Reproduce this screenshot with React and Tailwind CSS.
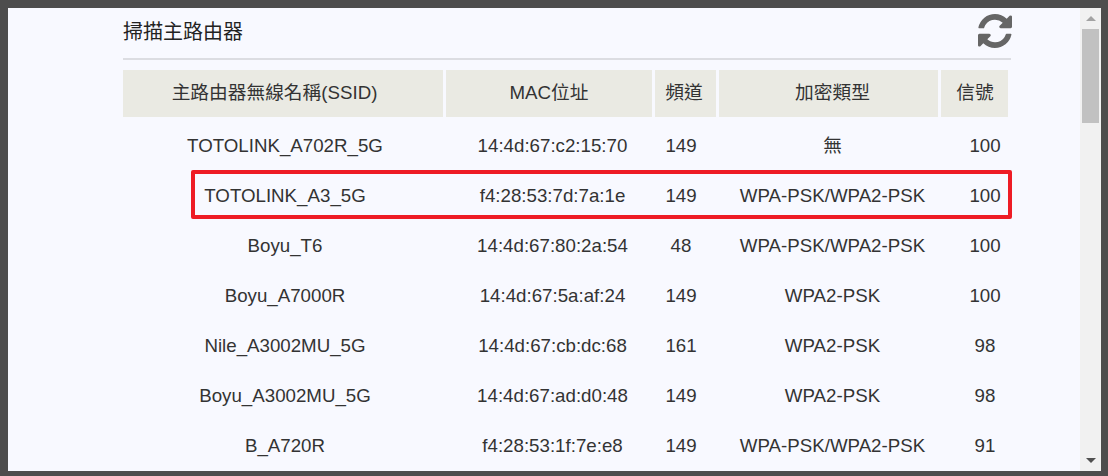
import React from "react";

const rows = [
  ["TOTOLINK_A702R_5G", "14:4d:67:c2:15:70", "149", "無", "100"],
  ["TOTOLINK_A3_5G", "f4:28:53:7d:7a:1e", "149", "WPA-PSK/WPA2-PSK", "100"],
  ["Boyu_T6", "14:4d:67:80:2a:54", "48", "WPA-PSK/WPA2-PSK", "100"],
  ["Boyu_A7000R", "14:4d:67:5a:af:24", "149", "WPA2-PSK", "100"],
  ["Nile_A3002MU_5G", "14:4d:67:cb:dc:68", "161", "WPA2-PSK", "98"],
  ["Boyu_A3002MU_5G", "14:4d:67:ad:d0:48", "149", "WPA2-PSK", "98"],
  ["B_A720R", "f4:28:53:1f:7e:e8", "149", "WPA-PSK/WPA2-PSK", "91"],
];

const headers = [
  ["主路由器無線名稱(SSID)", "pr-[17px]"],
  ["MAC位址", ""],
  ["頻道", "pr-[3px]"],
  ["加密類型", "pl-[8px]"],
  ["信號", "pl-[1px]"],
];

const cellPad = ["pl-[4px]", "pl-[7px]", "pr-[9px]", "pl-[8px]", "pl-[21px]"];

export default function App() {
  return (
    <div className="h-[476px] w-[1108px] overflow-hidden bg-[#4d4d4d] pt-2 pr-[7px] pb-[5px] pl-2 font-['Liberation_Sans','Noto_Sans_CJK_TC',sans-serif] text-[18.72px] text-[#333]">
      <div className="relative flex h-full bg-[#f8f9ff]">
        <div className="min-w-0 flex-1 overflow-hidden pl-[115px]">
          <div className="flex h-[52px] w-[888px] items-start justify-between border-b-2 border-[#dcdde2]">
            <h2 className="mt-3 text-[20px] leading-6 text-[#222]">掃描主路由器</h2>
            <svg viewBox="128 128 1536 1536" className="mt-1.5 -mr-px h-[34px] w-[34px] fill-[#666]">
              <path d="M1639 1056q0 5-1 7-64 268-268 434.5t-478 166.5q-146 0-282.5-55t-243.5-157l-129 129q-19 19-45 19t-45-19-19-45v-448q0-26 19-45t45-19h448q26 0 45 19t19 45-19 45l-137 137q71 66 161 102t187 36q134 0 250-65t186-179q11-17 53-117 8-23 30-23h192q13 0 22.5 9.5t9.5 22.5zm25-800v448q0 26-19 45t-45 19h-448q-26 0-45-19t-19-45 19-45l138-138q-148-137-349-137-134 0-250 65t-186 179q-11 17-53 117-8 23-30 23h-199q-13 0-22.5-9.5t-9.5-22.5v-7q65-268 270-434.5t480-166.5q146 0 284 55.5t245 156.5l130-129q19-19 45-19t45 19 19 45z" />
            </svg>
          </div>
          <table className="-ml-[3px] mt-[7px] w-[891px] table-fixed border-separate border-spacing-[3px] text-center">
            <colgroup>
              <col className="w-[320px]" />
              <col className="w-[206px]" />
              <col className="w-[61px]" />
              <col className="w-[219px]" />
              <col className="w-[67px]" />
            </colgroup>
            <thead>
              <tr>
                {headers.map(([h, pad]) => (
                  <th key={h} className={`h-[47px] bg-[#eaeae3] py-0 font-normal ${pad}`}>{h}</th>
                ))}
              </tr>
            </thead>
            <tbody>
              {rows.map((r) => (
                <tr key={r[1]}>
                  {r.map((c, i) => (
                    <td key={i} className={`h-[47px] pt-1.5 pb-0 ${cellPad[i]}`}>{c}</td>
                  ))}
                </tr>
              ))}
            </tbody>
          </table>
        </div>
        <div className="flex h-full w-[21px] shrink-0 flex-col bg-[#f1f1f1] px-0.5">
          <div className="flex h-[21px] items-center justify-center">
            <div className="h-0 w-0 border-x-[5px] border-b-[5px] border-x-transparent border-b-[#a3a3a3]" />
          </div>
          <div className="h-[94px] bg-[#c1c1c1]" />
          <div className="flex-1" />
          <div className="flex h-[21px] items-center justify-center">
            <div className="h-0 w-0 border-x-[5px] border-t-[5px] border-x-transparent border-t-[#505050]" />
          </div>
        </div>
        <div className="absolute top-[162px] left-[183px] h-[49px] w-[821px] rounded-[2px] border-4 border-[#ee1c25]" />
      </div>
    </div>
  );
}
